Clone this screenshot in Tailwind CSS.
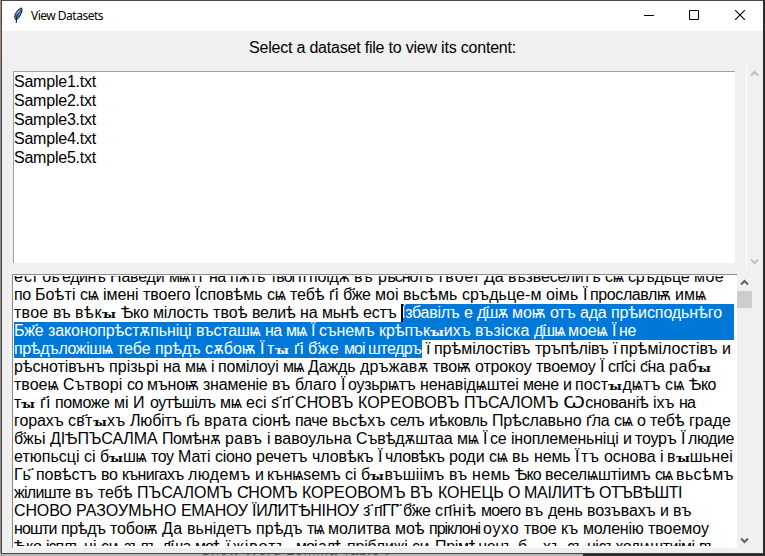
<!DOCTYPE html>
<html lang="cu">
<head>
<meta charset="utf-8">
<title>View Datasets</title>
<script src="https://cdn.jsdelivr.net/npm/@tailwindcss/browser@4"></script>
</head>
<body class="relative w-[765px] h-[556px] overflow-hidden bg-[#2b2b2b] text-black font-['Liberation_Sans','Noto_Sans','DejaVu_Sans',sans-serif]">
<!-- desktop behind the window -->
<div class="absolute inset-x-0 top-0 h-[2px] bg-[#3a3031]"></div>
<div class="absolute left-0 top-0 w-[2px] h-[60px] bg-[#b98377]"></div>
<div class="absolute left-0 top-[60px] w-[2px] h-[496px] bg-[#909090]"></div>
<div class="absolute left-0 bottom-0 w-[583px] h-[3px] bg-[#b4b4b4] overflow-hidden">
  <div class="absolute left-[201px] -top-[10px] text-[14px] leading-[14px] whitespace-nowrap text-[#555]"><span class="fit" data-w="189">Show Word Lemma Table I</span></div>
</div>
<!-- window -->
<div class="absolute left-px top-0 w-[762px] h-[554px] border-l border-t border-b border-[#4c4545] bg-[#f0f0f0] flex flex-col">
  <header class="h-[30px] shrink-0 bg-white flex items-center pl-[10px]">
    <svg class="w-[12px] h-[18px] -mt-px" viewBox="0 0 12 18">
      <path d="M9.8 1 C6.2 1.6 2.8 6 2.6 10.5 L4 13 L6.8 10.8 L8.4 8 L10 4 Z" fill="#4f87c4" stroke="#16202c" stroke-width="1"/>
      <path d="M8.5 3 L5 8.5 L4.2 16" fill="none" stroke="#111" stroke-width="1"/>
      <path d="M8 3 L5 7" stroke="#b9d7f3" stroke-width="1"/>
    </svg>
    <h1 class="ml-[7px] text-[12px] leading-[16px] whitespace-nowrap font-['Noto_Sans',sans-serif]"><span class="fit" data-w="72">View Datasets</span></h1>
    <div class="ml-auto mr-[18px] pb-[2px] flex items-center">
      <svg class="w-[10px] h-[10px]" viewBox="0 0 10 10"><path d="M0 5.5H10" stroke="#000"/></svg>
      <svg class="ml-[35px] w-[10px] h-[10px]" viewBox="0 0 10 10"><path d="M.5 .5H9.5V9.5H.5Z" fill="none" stroke="#000"/></svg>
      <svg class="ml-[36px] w-[10px] h-[10px]" viewBox="0 0 10 10"><path d="M0 0L10 10M10 0L0 10" stroke="#000" stroke-width="1.1"/></svg>
    </div>
  </header>
  <p class="h-[40px] shrink-0 pt-[8px] pl-[247px] text-[16px] leading-[18px] whitespace-nowrap"><span class="fit" data-w="267">Select a dataset file to view its content:</span></p>
  <div class="h-[193px] shrink-0 flex pl-[11px]">
    <ul class="w-[722px] h-[192px] bg-white border-t border-l border-[#a0a0a0] text-[16px] leading-[19px]">
      <li><span class="fit" data-w="82">Sample1.txt</span></li>
      <li><span class="fit" data-w="82">Sample2.txt</span></li>
      <li><span class="fit" data-w="82">Sample3.txt</span></li>
      <li><span class="fit" data-w="82">Sample4.txt</span></li>
      <li><span class="fit" data-w="82">Sample5.txt</span></li>
    </ul>
    <div class="-mt-[6px] ml-[11px] w-[16px] h-[203px] border-l border-white flex flex-col justify-between items-center pt-[5px] pb-[3px]">
      <svg class="w-[9px] h-[7px]" viewBox="0 0 9 7"><path d="M1 5.5L4.5 2L8 5.5" fill="none" stroke="#bfbfbf" stroke-width="2"/></svg>
      <svg class="w-[9px] h-[7px]" viewBox="0 0 9 7"><path d="M1 1.5L4.5 5L8 1.5" fill="none" stroke="#bfbfbf" stroke-width="2"/></svg>
    </div>
  </div>
  <div class="mt-[10px] h-[274px] shrink-0 flex pl-[10px]">
    <div class="w-[725px] h-[274px] bg-white border-t border-l border-[#8c8c8c] pl-px pr-[3px] overflow-hidden">
      <div class="h-[270px] mt-px overflow-hidden">
        <div id="text" class="-mt-[8px] text-[16px] leading-[18px]"></div>
      </div>
    </div>
    <div class="w-[15px] h-[274px] flex flex-col items-center pt-[5px] pb-[4px]">
      <svg class="w-[9px] h-[7px]" viewBox="0 0 9 7"><path d="M1 5.5L4.5 2L8 5.5" fill="none" stroke="#606060" stroke-width="2"/></svg>
      <div class="mt-[5px] w-[15px] h-[17px] bg-[#cdcdcd]"></div>
      <svg class="mt-auto w-[9px] h-[7px]" viewBox="0 0 9 7"><path d="M1 1.5L4.5 5L8 1.5" fill="none" stroke="#606060" stroke-width="2"/></svg>
    </div>
  </div>
</div>
<script>
// Each line: word@start column ..., final number is the right end of the line.
// "[" opens the selection, "]" closes it.
const lines = [
"есі@14 бъ@42 единъ@62 Наведи@110 мѩ@169 г҃і@192 на@209 пѫть@230 твоі@270 г҃і@298 поідѫ@309 въ@354 рѣснотъ@378 твоеі@437 Да@484 възвеселитъ@508 сѩ@605 сръдьце@628 мое@694 724",
"по@14 Боѣті@35 сѩ@80 імені@103 твоего@143 Їсповѣмь@195 сѩ@267 тебѣ@290 г҃і@329 б҃же@343 моі@375 вьсѣмь@403 сръдьце-м@462 оімь@546 Ї@583 прославлѭ@590 имѩ@675 706",
"твое@14 въ@53 вѣкꙑ@75 Ѣко@121 мілость@153 твоѣ@213 велиѣ@252 на@300 мьнѣ@322 естъ@363 [ Їзбавілъ@401 е@464 д҃шѫ@477 моѭ@512 отъ@550 ада@580 прѣисподьнѣго@611 722",
"Бж҃е@14 законопрѣстѫпьніці@48 въсташѩ@196 на@265 мѩ@286 Ї@311 сънемъ@319 крѣпъкꙑихъ@379 възіска@475 д҃шѩ@534 моеѩ@568 Ї@612 не@619 636",
"прѣдъложішѩ@14 тебе@117 прѣдъ@155 сѫбоѭ@205 Ї@260 тꙑ@267 г҃і@294 б҃же@308 моі@344 штедръ@368 ] ї@426 прѣмілостівъ@434 тръпѣлівъ@535 ї@613 прѣмілостівъ@620 и@722 731",
"рѣснотівънъ@14 прізьрі@109 на@163 мѩ@185 і@211 помілоуі@218 мѩ@283 Даждь@308 дръжавѫ@360 твоѭ@433 отрокоу@475 твоемоу@536 Ї@600 сп҃сі@608 с҃на@640 рабꙑ@669 712",
"твоеѩ@14 Сътворі@63 со@127 мъноѭ@147 знаменіе@203 въ@272 благо@295 Ї@341 оузьрѩтъ@348 ненавідѩштеі@420 мене@523 и@563 постꙑдѩтъ@575 сѩ@665 Ѣко@689 716",
"тꙑ@14 г҃і@40 поможе@55 мі@114 И@133 оутѣшілъ@150 мѩ@220 есі@246 ѕ҃@271 п҃@282 СН҃ОВЪ@295 КОРЕОВОВЪ@358 ПЪСАЛОМЪ@464 Ꙍснованіѣ@563 іхъ@653 на@679 695",
"горахъ@14 св҃тꙑхъ@68 Любітъ@130 г҃ь@186 врата@204 сіонѣ@252 паче@295 вьсѣхъ@332 селъ@390 иѣковль@429 Прѣславьно@492 г҃ла@586 сѩ@614 о@637 тебѣ@650 граде@689 731",
"б҃жьі@14 ДІѢПЪСАЛМА@50 Помѣнѫ@162 равъ@225 і@267 вавоульна@274 Съвѣдѫштаа@356 мѩ@457 Ї@483 се@490 іноплеменьніці@511 и@623 тоуръ@635 Ї@681 людие@688 734",
"етюпьсці@14 сі@84 бꙑшѩ@100 тоу@151 Маті@178 сіоно@215 речетъ@256 чловѣкъ@312 Ї@378 чловѣкъ@385 роди@449 сѩ@489 вь@512 немь@534 Ї@575 тъ@581 основа@604 і@660 вꙑшьнеі@667 733",
"Гь҃@14 повѣстъ@36 во@101 кънигахъ@122 людемъ@188 и@255 кънѩѕемъ@267 сі@345 бꙑвъшіімъ@361 въ@449 немь@472 Ѣко@515 веселѩштіимъ@545 сѩ@655 вьсѣмъ@676 734",
"жілиште@14 въ@75 тебѣ@98 ПЪСАЛОМЪ@137 С҃НОМЪ@237 КОРЕОВОМЪ@302 ВЪ@410 КОНЕЦЬ@438 О@508 МАІЛИТѢ@524 ОТЪВѢШТІ@599 682",
"СНОВО@14 РАЗОУМЬНО@76 ЕМАНОУ@181 ЇИЛ҃ИТѢНІНОУ@252 з҃@363 п҃ГГ҃@374 б҃же@403 сп҃ніѣ@435 моего@481 въ@525 день@548 возъвахъ@587 и@660 въ@673 692",
"ношти@14 прѣдъ@61 тобоѭ@110 Да@162 вьнідетъ@187 прѣдъ@256 тѩ@307 молитва@328 моѣ@395 пріклоні@429 оухо@483 твое@524 къ@561 моленію@583 твоемоу@648 709",
"Ѣко@14 ісплъ@46 ні@84 сѩ@101 зълъ@124 д҃ша@162 моѣ@195 ї@226 жівотъ@233 моі@296 адѣ@318 пріближі@347 сѩ@412 Прімѣненъ@435 бꙑхъ@518 съ@567 нісъходѩштиімі@587 въ@699 714"
];
const SPACE = 4.45;
const count = s => [...s].filter(c => c !== "\u0483").length;
const root = document.getElementById("text");
let selected = false;
for (const line of lines) {
  const row = document.createElement("div");
  row.className = "h-[18px] flex overflow-hidden whitespace-nowrap";
  root.append(row);
  const tokens = line.split(" ");
  const end = +tokens.pop();
  tokens.forEach((t, i) => {
    if (t === "[") {
      selected = true;
      const caret = document.createElement("i");
      caret.className = "w-[2px] -mr-[2px] h-[18px] bg-black relative z-10 shrink-0";
      row.append(caret);
      return;
    }
    if (t === "]") { selected = false; return; }
    const [word, x] = t.split("@");
    const next = tokens.slice(i + 1).find(n => n.includes("@"));
    const closing = tokens[i + 1] === "]";
    const stop = next ? +next.split("@")[1] : end;
    const cell = document.createElement("span");
    cell.className = selected && !closing ? "h-[18px] shrink-0 bg-[#0078d7] text-white" : "h-[18px] shrink-0";
    if (!next && selected) cell.className += " grow";
    cell.style.width = stop - x + "px";
    const inner = document.createElement("span");
    inner.className = closing ? "fit inline-block h-[18px] bg-[#0078d7] text-white" : "fit inline-block";
    inner.dataset.w = stop - x - (next ? SPACE : 0);
    for (const part of word.split(/([ꙑꙌ])/)) {
      if (!part) continue;
      const p = document.createElement("span");
      p.textContent = part;
      if (part === "ꙑ") p.className = "inline-block origin-left scale-x-[1.15] mr-[2px] font-['DejaVu_Serif','Noto_Sans',serif] font-bold text-[11px] leading-[16px]";
      if (part === "Ꙍ") p.className = "inline-block origin-left scale-x-[1.35] mr-[6px] leading-[18px]";
      inner.append(p);
    }
    cell.append(inner);
    row.append(cell);
  });
}
// Spread each run of text over its column width once the styles are in force.
function fitAll() {
  const els = [...document.querySelectorAll(".fit")];
  els.forEach(el => { el.style.letterSpacing = "0px"; });
  const widths = els.map(el => el.getBoundingClientRect().width);
  els.forEach((el, i) => {
    const gap = (+el.dataset.w - widths[i]) / count(el.textContent);
    el.style.letterSpacing = Math.max(-1, Math.min(1, gap)) + "px";
  });
}
fitAll();
window.addEventListener("load", () => {
  fitAll();
  requestAnimationFrame(fitAll);
  document.fonts.ready.then(fitAll);
  setTimeout(fitAll, 50);
});
</script>
</body>
</html>
